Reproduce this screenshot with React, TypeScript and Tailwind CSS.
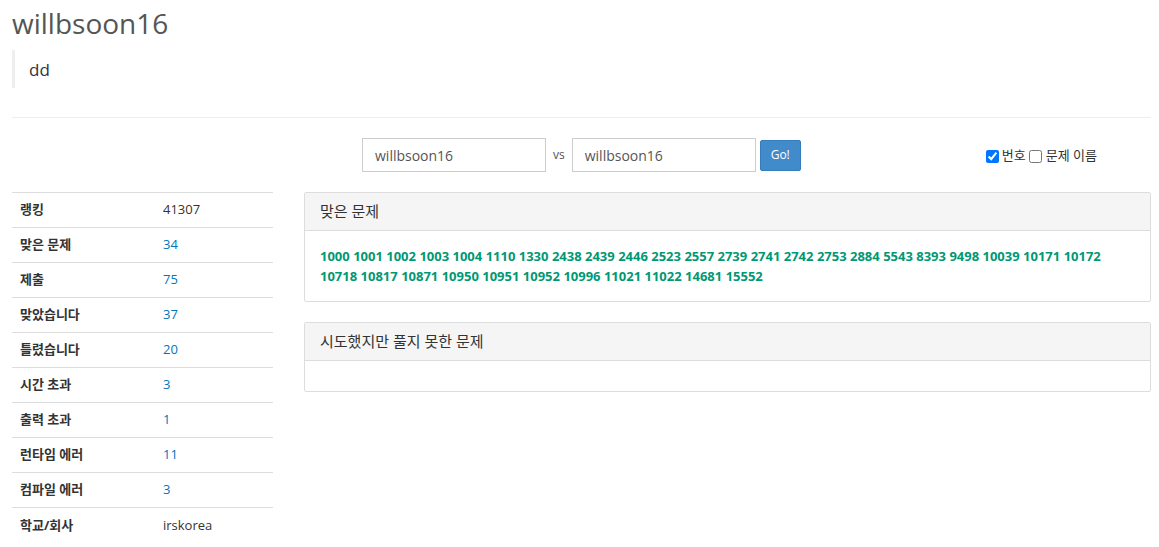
import React from "react";

const stats: { label: string; value: string; link?: boolean }[] = [
  { label: "랭킹", value: "41307" },
  { label: "맞은 문제", value: "34", link: true },
  { label: "제출", value: "75", link: true },
  { label: "맞았습니다", value: "37", link: true },
  { label: "틀렸습니다", value: "20", link: true },
  { label: "시간 초과", value: "3", link: true },
  { label: "출력 초과", value: "1", link: true },
  { label: "런타임 에러", value: "11", link: true },
  { label: "컴파일 에러", value: "3", link: true },
  { label: "학교/회사", value: "irskorea" },
];

const solved =
  "1000 1001 1002 1003 1004 1110 1330 2438 2439 2446 2523 2557 2739 2741 2742 2753 2884 5543 8393 9498 10039 10171 10172 10718 10817 10871 10950 10951 10952 10996 11021 11022 14681 15552".split(
    " "
  );

function Panel({ title, children }: { title: string; children?: React.ReactNode }) {
  return (
    <div className="border border-[#dddddd] rounded-[2px] bg-white">
      <div className="bg-[#f5f5f5] border-b border-[#dddddd] h-[38px] px-[15px] flex items-center text-[15px] text-[#333]">
        {title}
      </div>
      <div className="px-[15px] py-[15px]">{children}</div>
    </div>
  );
}

export default function App() {
  return (
    <div
      className="w-[1159px] h-[547px] overflow-hidden bg-white text-[#333] pl-[12px] pr-[8px] text-[13px]"
      style={{ fontFamily: '"Open Sans", "Noto Sans CJK KR", sans-serif' }}
    >
      <h1 className="text-[28px] leading-[34px] text-[#555] pt-[6px]">willbsoon16</h1>
      <blockquote className="mt-[10px] border-l-[3px] border-[#eeeeee] pl-[14px] h-[38px] flex items-center text-[17px] text-[#333] pt-[2px]">
        dd
      </blockquote>
      <hr className="mt-[29px] border-t border-[#eeeeee]" />

      <div className="mt-[20px] h-[34px] flex items-center">
        <div className="ml-[350px] flex items-center">
          <div className="w-[184px] h-[34px] border border-[#cccccc] px-[12px] flex items-center text-[14px] text-[#555]">
            willbsoon16
          </div>
          <span className="mx-[7px] text-[12px] text-[#555]">vs</span>
          <div className="w-[184px] h-[34px] border border-[#cccccc] px-[12px] flex items-center text-[14px] text-[#555]">
            willbsoon16
          </div>
          <button className="ml-[4px] w-[41px] h-[31px] bg-[#428bca] border border-[#357ebd] text-white text-[12px] rounded-[2px]">
            Go!
          </button>
        </div>
        <div className="ml-auto mr-[54px] flex items-center text-[13px] text-[#333] mt-[2px]">
          <input type="checkbox" defaultChecked className="w-[13px] h-[13px] mr-[3px] accent-[#0075ff]" />
          <span>번호</span>
          <input type="checkbox" className="w-[13px] h-[13px] ml-[3px] mr-[4px]" />
          <span>문제 이름</span>
        </div>
      </div>

      <div className="mt-[20px] flex gap-[31px]">
        <div className="w-[261px] shrink-0">
          <table className="w-full border-collapse">
            <tbody>
              {stats.map((s) => (
                <tr key={s.label} className="border-t border-[#dddddd] h-[35px]">
                  <th className="text-left font-bold pl-[8px] w-[151px] text-[13px] text-[#333]">{s.label}</th>
                  <td className={s.link ? "text-[#0076c0]" : "text-[#333]"}>{s.value}</td>
                </tr>
              ))}
            </tbody>
          </table>
        </div>
        <div className="flex-1 flex flex-col gap-[20px]">
          <Panel title="맞은 문제">
            <div className="text-[13px] font-bold leading-[20px] text-[#009874]">
              {solved.map((n, i) => (
                <React.Fragment key={n}>
                  <span>{n}</span>
                  {i < solved.length - 1 ? " " : ""}
                </React.Fragment>
              ))}
            </div>
          </Panel>
          <Panel title="시도했지만 풀지 못한 문제" />
        </div>
      </div>
    </div>
  );
}
